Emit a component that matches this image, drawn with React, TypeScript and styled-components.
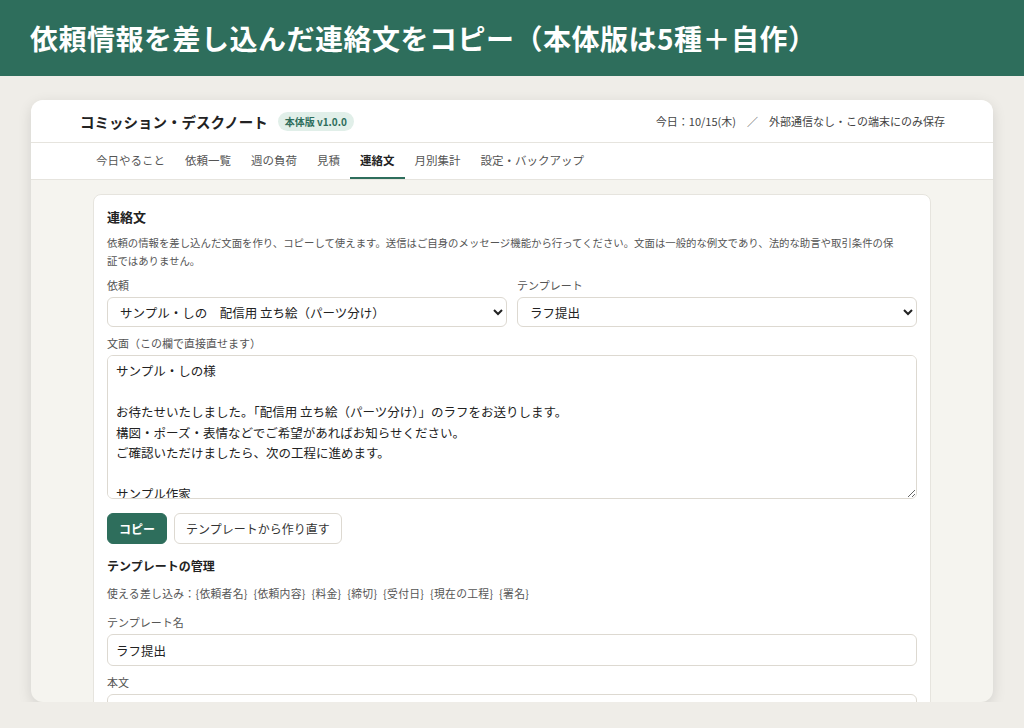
import React from "react";
import styled, { createGlobalStyle } from "styled-components";

const Global = createGlobalStyle`
  html, body { margin: 0; padding: 0; background: #efede8; }
  body { font-family: "Noto Sans CJK JP", "Noto Sans", sans-serif; color: #222; }
  * { box-sizing: border-box; }
`;

const Banner = styled.div`
  height: 76px; background: #2e6e5c; color: #fff;
  display: flex; align-items: center; padding: 0 30px;
  font-size: 28px; font-weight: 700; letter-spacing: 0.5px;
`;
const Stage = styled.div`padding: 24px 31px 0;`;
const Window = styled.div`
  height: 602px; background: #f5f4ef; border-radius: 12px; overflow: hidden;
  box-shadow: 0 4px 14px rgba(0,0,0,0.12); display: flex; flex-direction: column;
`;
const TopBar = styled.div`
  flex-shrink: 0; height: 43px; background: #fff; border-bottom: 1px solid #e6e4de;
  display: flex; align-items: center; justify-content: space-between; padding: 0 48px 0 49px;
`;
const AppTitle = styled.div`display: flex; align-items: center; gap: 10px; font-size: 14.5px; font-weight: 700;`;
const Badge = styled.span`
  background: #e1efe9; color: #2e6e5c; font-size: 10px; font-weight: 700;
  border-radius: 10px; padding: 2px 7px;
`;
const Meta = styled.div`font-size: 11px; color: #444; word-spacing: 2px;`;
const Nav = styled.nav`
  flex-shrink: 0; height: 37px; background: #fff; border-bottom: 1px solid #e6e4de;
  display: flex; padding: 0 55px;
`;
const Tab = styled.div<{ active?: boolean }>`
  padding: 0 10px; display: flex; align-items: center; font-size: 11.5px;
  color: ${p => (p.active ? "#222" : "#555")}; font-weight: ${p => (p.active ? 700 : 400)};
  border-bottom: 2px solid ${p => (p.active ? "#2e6e5c" : "transparent")};
`;
const Body = styled.div`padding: 14px 62px 0;`;
const Card = styled.div`
  background: #fff; border: 1px solid #e6e4de; border-radius: 8px; padding: 12px 13px;
`;
const H2 = styled.div`font-size: 13px; font-weight: 700; margin-bottom: 8px;`;
const Desc = styled.p`font-size: 10.4px; color: #555; line-height: 18px; margin: 0 22px 8px 0;`;
const Row = styled.div`display: grid; grid-template-columns: 1fr 1fr; gap: 10px;`;
const Label = styled.div`font-size: 11px; color: #555; margin: 0 0 5px; line-height: 14px;`;
const Select = styled.select`
  width: 100%; height: 30px; border: 1px solid #ddd9d1; border-radius: 6px; background: #fff;
  font-size: 12.5px; font-family: inherit; padding: 0 8px; color: #222;
`;
const Area = styled.textarea<{ h: number }>`
  width: 100%; height: ${p => p.h}px; border: 1px solid #ddd9d1; border-radius: 6px;
  font-family: inherit; font-size: 12.5px; line-height: 20.5px; padding: 5px 8px; color: #222; display: block;
`;
const Input = styled.input`
  width: 100%; height: 32px; border: 1px solid #ddd9d1; border-radius: 6px;
  font-family: inherit; font-size: 12.5px; padding: 0 8px; color: #222; display: block;
`;
const Field = styled.div<{ gap?: number }>`margin-top: ${p => p.gap ?? 9}px;`;
const Buttons = styled.div`display: flex; gap: 7px; margin-top: 14px;`;
const Btn = styled.button<{ primary?: boolean }>`
  height: 31px; padding: 0 11px; border-radius: 6px; font-family: inherit; font-size: 12px;
  background: ${p => (p.primary ? "#2e6e5c" : "#fff")}; color: ${p => (p.primary ? "#fff" : "#333")};
  border: 1px solid ${p => (p.primary ? "#2e6e5c" : "#ddd9d1")}; font-weight: ${p => (p.primary ? 700 : 400)};
`;
const H3 = styled.div`font-size: 12px; font-weight: 700; margin-top: 13px;`;
const Hint = styled.div`font-size: 10.8px; color: #555; margin-top: 11px; word-spacing: 3px; letter-spacing: 0.3px;`;

const text = `サンプル・しの様

お待たせいたしました。「配信用 立ち絵（パーツ分け）」のラフをお送りします。
構図・ポーズ・表情などでご希望があればお知らせください。
ご確認いただけましたら、次の工程に進めます。

サンプル作家`;

export default function App() {
  const tabs = ["今日やること", "依頼一覧", "週の負荷", "見積", "連絡文", "月別集計", "設定・バックアップ"];
  return (
    <>
      <Global />
      <Banner>依頼情報を差し込んだ連絡文をコピー（本体版は5種＋自作）</Banner>
      <Stage>
        <Window>
          <TopBar>
            <AppTitle>コミッション・デスクノート <Badge>本体版 v1.0.0</Badge></AppTitle>
            <Meta>今日：10/15(木)　／　外部通信なし・この端末にのみ保存</Meta>
          </TopBar>
          <Nav>
            {tabs.map(t => <Tab key={t} active={t === "連絡文"}>{t}</Tab>)}
          </Nav>
          <Body>
            <Card>
              <H2>連絡文</H2>
              <Desc>依頼の情報を差し込んだ文面を作り、コピーして使えます。送信はご自身のメッセージ機能から行ってください。文面は一般的な例文であり、法的な助言や取引条件の保証ではありません。</Desc>
              <Row>
                <div>
                  <Label>依頼</Label>
                  <Select defaultValue="a"><option value="a">サンプル・しの　配信用 立ち絵（パーツ分け）</option></Select>
                </div>
                <div>
                  <Label>テンプレート</Label>
                  <Select defaultValue="a"><option value="a">ラフ提出</option></Select>
                </div>
              </Row>
              <Field>
                <Label>文面（この欄で直接直せます）</Label>
                <Area h={144} defaultValue={text} />
              </Field>
              <Buttons>
                <Btn primary>コピー</Btn>
                <Btn>テンプレートから作り直す</Btn>
              </Buttons>
              <H3>テンプレートの管理</H3>
              <Hint>使える差し込み：{"{依頼者名} {依頼内容} {料金} {締切} {受付日} {現在の工程} {署名}"}</Hint>
              <Field gap={14}>
                <Label>テンプレート名</Label>
                <Input defaultValue="ラフ提出" />
              </Field>
              <Field>
                <Label>本文</Label>
                <Area h={100} defaultValue="" />
              </Field>
            </Card>
          </Body>
        </Window>
      </Stage>
    </>
  );
}
